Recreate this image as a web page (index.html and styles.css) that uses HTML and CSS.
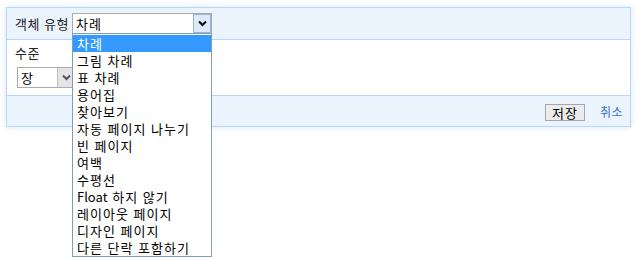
FILE: index.html
```html
<!DOCTYPE html>
<html lang="ko">
<head>
  <meta charset="UTF-8">
  <title>개체 속성</title>
  <link rel="stylesheet" href="styles.css">
</head>
<body>
  <div class="panel">
    <div class="panel-head">
      <span class="label">객체 유형</span>
      <div class="combo">
        <div class="select wide">
          <span class="value">차례</span>
          <span class="arrow open">
            <svg width="9" height="7" viewBox="0 0 9 7"><path d="M1 1.5 L4.5 5 L8 1.5" fill="none" stroke="#000" stroke-width="2"/></svg>
          </span>
        </div>
        <ul class="options">
          <li class="selected">차례</li>
          <li>그림 차례</li>
          <li>표 차례</li>
          <li>용어집</li>
          <li>찾아보기</li>
          <li>자동 페이지 나누기</li>
          <li>빈 페이지</li>
          <li>여백</li>
          <li>수평선</li>
          <li><span class="latin">Float</span> 하지 않기</li>
          <li>레이아웃 페이지</li>
          <li>디자인 페이지</li>
          <li>다른 단락 포함하기</li>
        </ul>
      </div>
    </div>

    <div class="panel-body">
      <div class="label">수준</div>
      <div class="select narrow">
        <span class="value">장</span>
        <span class="arrow">
          <svg width="9" height="7" viewBox="0 0 9 7"><path d="M1 1.5 L4.5 5 L8 1.5" fill="none" stroke="#555" stroke-width="2"/></svg>
        </span>
      </div>
    </div>

    <div class="panel-foot">
      <button class="btn">저장</button>
      <a class="cancel" href="#">취소</a>
    </div>
  </div>
</body>
</html>
```

FILE: styles.css
```css
html {
  height: 100%;
}
body {
  margin: 0;
  min-height: 100%;
  box-sizing: border-box;
  padding: 7px 0 0 6px;
  background: #fff;
  font-family: "Noto Sans CJK KR", "Noto Sans", sans-serif;
  font-size: 13px;
  color: #222;
}
.panel {
  width: 623px;
  border: 1px solid #b9d6f6;
  background: #fff;
  box-shadow: 0 0 6px rgba(160, 200, 245, 0.45);
}
.panel-head {
  height: 31px;
  display: flex;
  align-items: center;
  padding-left: 8px;
  background: #ebf3fd;
  border-bottom: 1px solid #b9d6f6;
}
.label {
  line-height: 16px;
  color: #222;
  letter-spacing: 0.5px;
}
.panel-head .label {
  width: 57px;
  margin-top: 1px;
}
.combo {
  position: relative;
}
.select {
  display: flex;
  align-items: stretch;
  box-sizing: border-box;
  height: 21px;
  border: 1px solid #a9abae;
  background: #fff;
}
.select .value {
  flex: 1;
  padding-left: 3px;
  line-height: 19px;
  color: #000;
  letter-spacing: 1px;
}
.wide {
  width: 140px;
}
.narrow {
  width: 58px;
  margin-left: 2px;
}
.arrow {
  width: 16px;
  display: flex;
  align-items: center;
  justify-content: center;
  background: #e4e4e4;
  border-left: 1px solid #c0c0c0;
}
.arrow.open {
  background: #dde9f8;
  border: 1px solid #9cb4d4;
}
.options {
  position: absolute;
  left: 0;
  top: 20px;
  width: 138px;
  margin: 0;
  padding: 1px 0 0;
  list-style: none;
  background: #fff;
  border: 1px solid #7b9ebd;
  z-index: 2;
}
.options li {
  height: 17px;
  line-height: 17px;
  padding-left: 4px;
  color: #000;
  letter-spacing: 1px;
  white-space: nowrap;
}
.options .latin {
  letter-spacing: 0;
}
.options li.selected {
  background: #3399ff;
  color: #fff;
}
.panel-body {
  height: 55px;
  padding: 5px 0 0 8px;
  box-sizing: border-box;
}
.panel-body .label {
  margin-bottom: 6px;
}
.panel-foot {
  height: 30px;
  display: flex;
  align-items: center;
  justify-content: flex-end;
  padding-right: 7px;
  background: #ebf3fd;
  border-top: 1px solid #b9d6f6;
}
.btn {
  height: 17px;
  width: 40px;
  padding: 0;
  font-family: inherit;
  font-size: 13px;
  line-height: 15px;
  letter-spacing: 1px;
  color: #000;
  background: #ececec;
  border: 1px solid #a7a7a7;
  margin-right: 15px;
  margin-top: 2px;
}
.cancel {
  color: #3b73c9;
  text-decoration: none;
  font-size: 12px;
  letter-spacing: 0.5px;
}
```
